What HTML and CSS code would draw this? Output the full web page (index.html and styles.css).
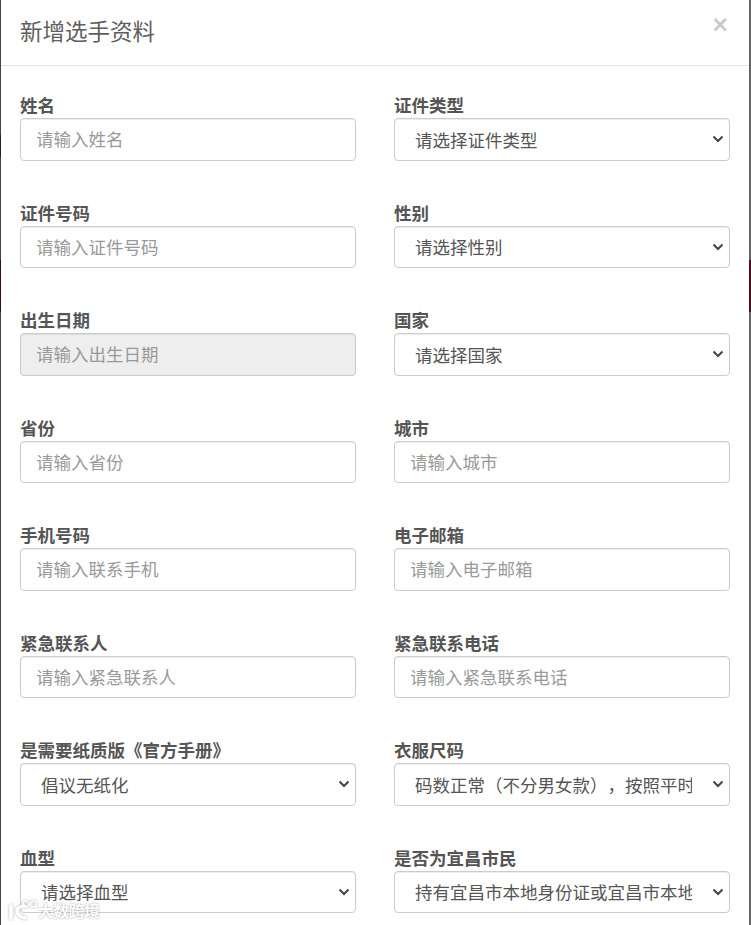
FILE: index.html
```html
<!DOCTYPE html>
<html lang="zh-CN">
<head>
<meta charset="utf-8">
<title>新增选手资料</title>
<link rel="stylesheet" href="styles.css">
</head>
<body>
<div class="modal">
  <header class="modal-header">
    <h4 class="modal-title">新增选手资料</h4>
    <span class="close">×</span>
  </header>
  <form class="modal-body">
    <div class="field"><label>姓名</label><input class="control" placeholder="请输入姓名"></div>
    <div class="field"><label>证件类型</label><select class="control"><option>请选择证件类型</option></select></div>
    <div class="field"><label>证件号码</label><input class="control" placeholder="请输入证件号码"></div>
    <div class="field"><label>性别</label><select class="control"><option>请选择性别</option></select></div>
    <div class="field"><label>出生日期</label><input class="control" placeholder="请输入出生日期" disabled></div>
    <div class="field"><label>国家</label><select class="control"><option>请选择国家</option></select></div>
    <div class="field"><label>省份</label><input class="control" placeholder="请输入省份"></div>
    <div class="field"><label>城市</label><input class="control" placeholder="请输入城市"></div>
    <div class="field"><label>手机号码</label><input class="control" placeholder="请输入联系手机"></div>
    <div class="field"><label>电子邮箱</label><input class="control" placeholder="请输入电子邮箱"></div>
    <div class="field"><label>紧急联系人</label><input class="control" placeholder="请输入紧急联系人"></div>
    <div class="field"><label>紧急联系电话</label><input class="control" placeholder="请输入紧急联系电话"></div>
    <div class="field"><label>是需要纸质版《官方手册》</label><select class="control"><option>倡议无纸化</option></select></div>
    <div class="field"><label>衣服尺码</label><select class="control"><option>码数正常（不分男女款），按照平时尺码选择即可</option></select></div>
    <div class="field"><label>血型</label><select class="control"><option>请选择血型</option></select></div>
    <div class="field"><label>是否为宜昌市民</label><select class="control"><option>持有宜昌市本地身份证或宜昌市本地户口</option></select></div>
  </form>
</div>
<div class="watermark">
  <svg class="wm-logo" width="32" height="22" viewBox="0 0 32 22" fill="none" stroke="#fff" stroke-linecap="round"><path d="M4 7v12" stroke-width="3.6"/><path d="M17 7c-4 .5-7 2-7 5s3 6 8 7" stroke-width="3.6"/><circle cx="19" cy="5" r="3" stroke-width="1.6"/><circle cx="26.500" cy="5" r="3" stroke-width="1.6"/></svg>
  <span class="wm-text">大数跨境</span>
</div>
</body>
</html>
```
FILE: styles.css
```css
* { box-sizing: border-box; }
html, body { height: 100%; }
body {
  margin: 0;
  height: 925px;
  overflow: hidden;
  position: relative;
  background-color: #666;
  background-image:
    linear-gradient(#444 0 135px, #222 135px 157px, #444 157px 260px, #2e1014 260px 312px, #444 312px),
    linear-gradient(#666 0 260px, #45101a 260px 312px, #666 312px);
  background-size: 1px 100%, 2px 100%;
  background-position: left top, right top;
  background-repeat: no-repeat;
  font-family: "Noto Sans CJK SC", "Liberation Sans", sans-serif;
  text-spacing-trim: space-all;
  color: #555;
}
.modal {
  margin: 0 1px;
  width: 748px;
  height: 925px;
  background: #fff;
  overflow: hidden;
}
.modal-header {
  height: 66px;
  border-bottom: 1px solid #e5e5e5;
  padding: 0 19px;
  display: flex;
  justify-content: space-between;
}
.modal-title {
  margin: 0;
  font-size: 22.5px;
  font-weight: 400;
  line-height: 60px;
  color: #5e5e5e;
}
.close {
  font-family: "Liberation Sans", sans-serif;
  font-size: 27px;
  font-weight: 400;
  line-height: 51px;
  color: #c8c8c8;
  margin-right: 2px;
  -webkit-text-stroke: .6px #c8c8c8;
}
.modal-body {
  display: grid;
  grid-template-columns: 336px 336px;
  column-gap: 38px;
  padding: 27px 19px 0;
}
.field {
  height: 107.5px;
}
.field label {
  display: block;
  height: 25px;
  font-size: 17.5px;
  font-weight: 700;
  line-height: 24px;
  color: #555;
}
.control {
  display: block;
  width: 100%;
  height: 42.5px;
  padding: 0 16px 1px 16px;
  border: 1px solid #ccc;
  border-radius: 4px;
  background-color: #fff;
  font-family: inherit;
  font-size: 17.5px;
  color: #555;
  box-shadow: inset 0 1px 1px rgba(0,0,0,.075);
  outline: none;
  text-spacing-trim: space-all;
}
input.control { padding-left: 16px; text-indent: -1px; }
select.control {
  appearance: none;
  padding: 0 37px 0 20px;
  background-image: url("data:image/svg+xml,%3Csvg xmlns='http://www.w3.org/2000/svg' width='12' height='8' viewBox='0 0 12 8'%3E%3Cpath d='M1.5 1.5 6 6l4.500-4.500' fill='none' stroke='%23444' stroke-width='2'/%3E%3C/svg%3E");
  background-repeat: no-repeat;
  background-position: right 5px center;
  background-size: 12px 8px;
}
.control::placeholder { color: #999; opacity: 1; }
.control:disabled { background: #eee; }
.watermark {
  position: absolute;
  left: 7px;
  top: 899px;
  display: flex;
  align-items: center;
  opacity: .9;
  filter: drop-shadow(0 0 1px rgba(0,0,0,.4));
}
.wm-text {
  font-size: 15.5px;
  line-height: 22px;
  font-weight: 700;
  color: #fff;
  margin-left: -1px;
}
```
